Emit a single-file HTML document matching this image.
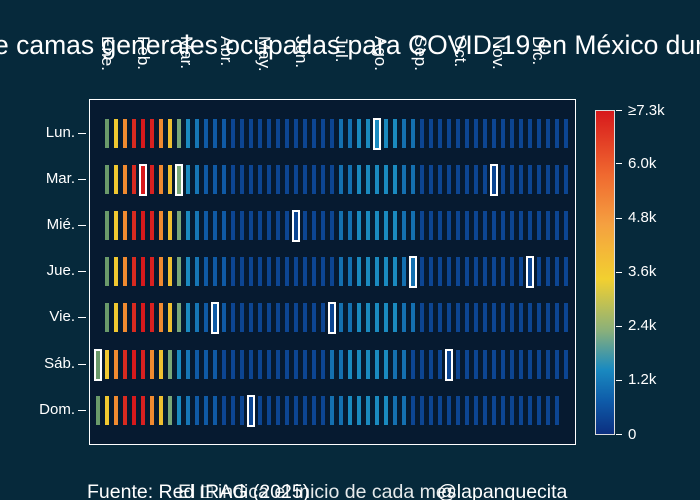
<!DOCTYPE html>
<html><head><meta charset="utf-8"><style>
html,body{margin:0;width:700px;height:500px;overflow:hidden}
body{background:#06293b;position:relative;font-family:"Liberation Sans","DejaVu Sans",sans-serif;color:#fff}
.a{position:absolute}
.title{top:30px;left:-6px;font-size:26.5px;white-space:nowrap}
.plot{left:89px;top:99px;width:485px;height:344px;border:1px solid #fff;background:#061a30}
.mon{font-size:17px;transform:rotate(90deg);transform-origin:0 0;white-space:nowrap}
.day{font-size:15px;right:625px;text-align:right}
.tk{height:1px;width:8px;background:#fff;left:78px}
.bar{width:4px;height:29px}
.hl{width:4px;height:28px;border:2px solid #fff;margin:-1px 0 0 -2px}
.cl{font-size:15px;left:628px}
.ct{width:6px;height:1px;background:#fff;left:616px}
.foot{font-size:19.5px;top:481px;white-space:nowrap}
</style></head><body>
<div class="a title">e camas generales ocupadas para COVID-19 en México durante 2020</div>
<div class="a plot"></div>
<div id="g"></div>
<div class="a" style="left:595px;top:110px;width:18px;height:323px;border:1px solid #ddd;background:linear-gradient(#d7191c 0%,#f06a30 20%,#f5a040 35%,#f2d030 52%,#8ab07a 68%,#1a8ac0 80%,#0e5aa8 90%,#0c2f80 100%)"></div>
<div class="a cl" style="top:102px">≥7.3k</div>
<div class="a cl" style="top:155px">6.0k</div>
<div class="a cl" style="top:209px">4.8k</div>
<div class="a cl" style="top:263px">3.6k</div>
<div class="a cl" style="top:317px">2.4k</div>
<div class="a cl" style="top:371px">1.2k</div>
<div class="a cl" style="top:426px">0</div>
<div class="a ct" style="top:110px"></div><div class="a ct" style="top:163px"></div><div class="a ct" style="top:218px"></div><div class="a ct" style="top:272px"></div><div class="a ct" style="top:326px"></div><div class="a ct" style="top:380px"></div><div class="a ct" style="top:434px"></div>
<div class="a foot" style="left:87px">Fuente: Red IRAG (2025)</div>
<div class="a foot" style="left:178px;opacity:.9">El □ indica el inicio de cada mes</div>
<div class="a foot" style="left:437px">@lapanquecita</div>
<script>
var g=document.getElementById('g'),h='';
var mons=[['Ene.',117],['Feb.',153],['Mar.',196],['Abr.',236],['May.',274],['Jun.',311],['Jul.',351],['Ago.',390],['Sep.',430],['Oct.',470],['Nov.',508],['Dic.',548]];
mons.forEach(function(m){h+='<div class="a mon" style="left:'+m[1]+'px;top:36px">'+m[0]+'</div>';});
var days=['Lun.','Mar.','Mié.','Jue.','Vie.','Sáb.','Dom.'];
var early=['#6a9a6a','#f0c830','#f08a30','#d92a20','#d7191c','#d92020','#f08a30','#f0c030','#7aa878','#1a8ac0'];
function col(i){if(i<early.length)return early[i];if(i==10)return '#1676b5';if(i>=26&&i<=34)return (i>=28&&i<=32)?'#1a8abf':'#1470b0';if(i<14)return '#0f5aa5';return '#0c4592';}
var hl={0:[30],1:[4,8,43],2:[21],3:[34,47],4:[12,25],5:[-1,38],6:[16]};
for(var r=0;r<7;r++){var y=133+r*46.1;
h+='<div class="a day" style="top:'+(y-9)+'px">'+days[r]+'</div><div class="a tk" style="top:'+y+'px"></div>';
var s=r>=5?-1:0,e=r==6?50:51;
for(var c=s;c<=e;c++){var x=107+c*9;var idx=c+(r>=5?1:0);var cls='a bar'+(hl[r].indexOf(c)>=0?' hl':'');
h+='<div class="'+cls+'" style="left:'+(x-2)+'px;top:'+(y-14)+'px;background:'+col(idx)+'"></div>';}}
g.innerHTML=h;
</script>
</body></html>
